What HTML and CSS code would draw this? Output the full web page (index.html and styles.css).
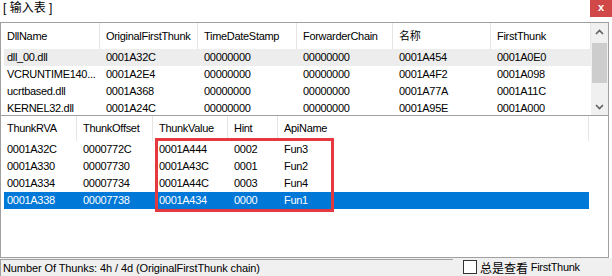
FILE: index.html
```html
<!DOCTYPE html>
<html lang="zh">
<head>
    <meta charset="UTF-8">
    <title>输入表</title>
    <link rel="stylesheet" href="styles.css">
</head>
<body>
    <div class="window">
        <!-- Barra de título -->
        <div class="caption">
            <span class="caption-title">[ 输入表 ]</span>
            <span class="close-btn">x</span>
        </div>

        <!-- Lista de DLLs -->
        <div class="dll-list">
            <div class="dll-body">
                <div class="list-header dll-cols">
                    <div class="hcell">DllName</div>
                    <div class="hcell">OriginalFirstThunk</div>
                    <div class="hcell">TimeDateStamp</div>
                    <div class="hcell">ForwarderChain</div>
                    <div class="hcell">名称</div>
                    <div class="hcell">FirstThunk</div>
                </div>
                <div class="list-row dll-row hot">
                    <div class="cell">dll_00.dll</div>
                    <div class="cell">0001A32C</div>
                    <div class="cell">00000000</div>
                    <div class="cell">00000000</div>
                    <div class="cell">0001A454</div>
                    <div class="cell">0001A0E0</div>
                </div>
                <div class="list-row dll-row">
                    <div class="cell">VCRUNTIME140...</div>
                    <div class="cell">0001A2E4</div>
                    <div class="cell">00000000</div>
                    <div class="cell">00000000</div>
                    <div class="cell">0001A4F2</div>
                    <div class="cell">0001A098</div>
                </div>
                <div class="list-row dll-row">
                    <div class="cell">ucrtbased.dll</div>
                    <div class="cell">0001A368</div>
                    <div class="cell">00000000</div>
                    <div class="cell">00000000</div>
                    <div class="cell">0001A77A</div>
                    <div class="cell">0001A11C</div>
                </div>
                <div class="list-row dll-row">
                    <div class="cell">KERNEL32.dll</div>
                    <div class="cell">0001A24C</div>
                    <div class="cell">00000000</div>
                    <div class="cell">00000000</div>
                    <div class="cell">0001A95E</div>
                    <div class="cell">0001A000</div>
                </div>
            </div>
            <div class="scrollbar">
                <div class="sb-btn">
                    <svg width="9" height="6" viewBox="0 0 9 6"><path d="M1 5 L4.5 1.5 L8 5" fill="none" stroke="#606060" stroke-width="1.6"/></svg>
                </div>
                <div class="sb-thumb"></div>
                <div class="sb-space"></div>
                <div class="sb-btn">
                    <svg width="9" height="6" viewBox="0 0 9 6"><path d="M1 1 L4.5 4.5 L8 1" fill="none" stroke="#606060" stroke-width="1.6"/></svg>
                </div>
            </div>
        </div>

        <!-- Lista de thunks -->
        <div class="thunk-list">
            <div class="list-header thunk-cols">
                <div class="hcell">ThunkRVA</div>
                <div class="hcell">ThunkOffset</div>
                <div class="hcell">ThunkValue</div>
                <div class="hcell">Hint</div>
                <div class="hcell">ApiName</div>
            </div>
            <div class="list-row thunk-row">
                <div class="cell">0001A32C</div>
                <div class="cell">0000772C</div>
                <div class="cell">0001A444</div>
                <div class="cell">0002</div>
                <div class="cell">Fun3</div>
            </div>
            <div class="list-row thunk-row">
                <div class="cell">0001A330</div>
                <div class="cell">00007730</div>
                <div class="cell">0001A43C</div>
                <div class="cell">0001</div>
                <div class="cell">Fun2</div>
            </div>
            <div class="list-row thunk-row">
                <div class="cell">0001A334</div>
                <div class="cell">00007734</div>
                <div class="cell">0001A44C</div>
                <div class="cell">0003</div>
                <div class="cell">Fun4</div>
            </div>
            <div class="list-row thunk-row selected">
                <div class="cell">0001A338</div>
                <div class="cell">00007738</div>
                <div class="cell">0001A434</div>
                <div class="cell">0000</div>
                <div class="cell">Fun1</div>
            </div>
            <!-- Marco rojo de anotación -->
            <div class="mark"></div>
        </div>

        <!-- Barra de estado -->
        <div class="statusbar">
            <div class="status-panel">Number Of Thunks: 4h / 4d (OriginalFirstThunk chain)</div>
            <label class="check"><span class="check-box"></span><span class="check-cjk">总是查看</span> FirstThunk</label>
        </div>
    </div>
</body>
</html>
```

FILE: styles.css
```css
body {
    margin: 0;
    background: white;
    font-family: "Liberation Sans", "Noto Sans CJK SC", sans-serif;
}

.window {
    width: 612px;
    height: 276px;
    overflow: hidden;
    background: white;
}

.caption {
    display: flex;
    justify-content: space-between;
    align-items: flex-start;
    height: 22px;
}

.caption-title {
    font-size: 12px;
    line-height: 16px;
    padding-left: 3px;
    color: #000;
}

.close-btn {
    width: 22px;
    height: 17px;
    background: #d04848;
    color: white;
    font-size: 11px;
    font-weight: bold;
    line-height: 15px;
    text-align: center;
}

/* Listas */
.dll-list {
    display: flex;
    width: 607px;
    height: 92px;
    border: 1px solid #a0a0a0;
    overflow: hidden;
}

.dll-body {
    flex: 1;
    overflow: hidden;
}

.list-header {
    display: grid;
    height: 26px;
    align-items: stretch;
}

.hcell {
    border-right: 1px solid #e5e5e5;
    padding-left: 6px;
    font-size: 11px;
    letter-spacing: -0.3px;
    line-height: 26px;
    white-space: nowrap;
    overflow: hidden;
}

.list-row {
    display: grid;
    height: 17px;
    margin-left: 3px;
}

.cell {
    font-size: 11px;
    letter-spacing: -0.3px;
    line-height: 17px;
    padding-left: 6px;
    white-space: nowrap;
    overflow: hidden;
    color: #000;
}

.list-row .cell:first-child {
    padding-left: 3px;
}

.dll-cols {
    grid-template-columns: 99px 98px 99px 96px 98px 1fr;
}

.dll-row {
    grid-template-columns: 96px 98px 99px 96px 98px 1fr;
}

.hot {
    background: #ededed;
}

.scrollbar {
    width: 17px;
    display: flex;
    flex-direction: column;
    background: #f0f0f0;
}

.sb-btn {
    height: 17px;
    display: flex;
    align-items: center;
    justify-content: center;
}

.sb-thumb {
    height: 40px;
    margin: 3px 1px 0;
    background: #cdcdcd;
}

.sb-space {
    flex: 1;
}

.thunk-list {
    position: relative;
    width: 607px;
    height: 141px;
    border: 1px solid #a0a0a0;
    border-top: none;
}

.thunk-cols {
    width: 588px;
    height: 25px;
    grid-template-columns: 76px 76px 75px 50px 1fr;
}

.thunk-cols .hcell {
    line-height: 24px;
}

.thunk-row {
    width: 585px;
    grid-template-columns: 73px 76px 75px 50px 1fr;
}

.selected {
    background: #0078d7;
}

.selected .cell {
    color: white;
}

.mark {
    position: absolute;
    left: 154px;
    top: 22px;
    width: 173px;
    height: 68px;
    border: 3px solid #e5393f;
}

/* Barra de estado */
.statusbar {
    display: flex;
    align-items: center;
    height: 18px;
    background: #f0f0f0;
}

.status-panel {
    width: 450px;
    height: 16px;
    margin-top: 1px;
    border-top: 1px solid #a0a0a0;
    border-left: 1px solid #a0a0a0;
    padding-left: 2px;
    font-size: 11px;
    letter-spacing: -0.1px;
    line-height: 17px;
    white-space: nowrap;
    overflow: hidden;
}

.check {
    display: flex;
    align-items: center;
    margin-left: 10px;
    font-size: 11px;
    letter-spacing: -0.3px;
    color: #000;
    white-space: pre;
}

.check-box {
    width: 12px;
    height: 12px;
    margin-right: 3px;
    border: 1px solid #333;
    background: white;
}

.check-cjk {
    font-size: 12px;
    letter-spacing: 0;
}
```
